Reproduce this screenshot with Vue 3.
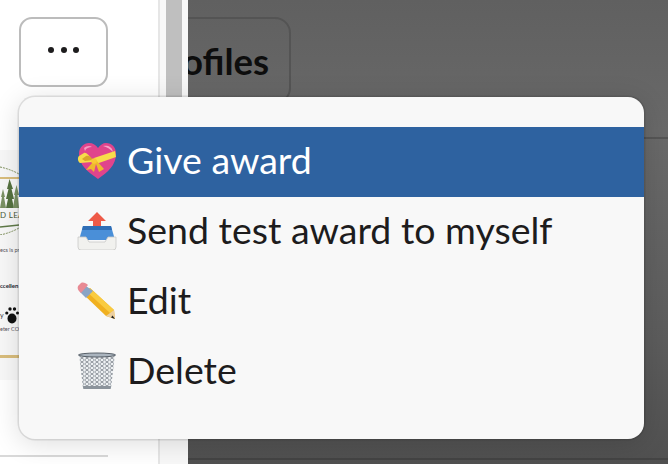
<template>
  <div class="screen">
    <aside class="sidebar">
      <div class="side-panel">
        <button class="more-btn" aria-label="More actions">
          <span class="dot"></span><span class="dot"></span><span class="dot"></span>
        </button>
        <!-- award certificate thumbnail, mostly hidden by the menu -->
        <div class="thumb">
          <svg class="crest" viewBox="0 0 19 70" width="19" height="70">
            <path d="M0 2 Q10 4 19 9" fill="none" stroke="#7d8f5a" stroke-width="1" stroke-dasharray="2 1" />
            <path d="M0 13h19" stroke="#d9bd7c" stroke-width="2" />
            <path d="M9.500 14l3.500 10h-1.500l2.500 10h-2l2 9H6l2-9H6l2.500-10H7z" fill="#55723f" />
            <path d="M3 24l2 8H4l2 11H0l2-11H1zM16.500 20l2.500 10h-1.500l1.500 13h-6l2-13h-1z" fill="#7a9163" />
            <text x="0" y="53" class="crest-text">D LEA</text>
            <path d="M0 62 Q10 61 19 60" fill="none" stroke="#5f7a48" stroke-width="1.500" />
            <path d="M0 70 Q10 68 19 63" fill="none" stroke="#7d8f5a" stroke-width="1" stroke-dasharray="2 1" />
          </svg>
          <div class="thumb-small">ecs is pr</div>
          <div class="thumb-bold">ccellen</div>
          <div class="thumb-paw">
            <span class="paw-text">y</span>
            <svg viewBox="0 0 14 18" width="14" height="18">
              <ellipse cx="7" cy="12.500" rx="4.500" ry="5" fill="#111" />
              <circle cx="1.800" cy="7" r="1.600" fill="#111" />
              <circle cx="5" cy="3" r="1.700" fill="#111" />
              <circle cx="9.500" cy="3" r="1.700" fill="#111" />
              <circle cx="12.500" cy="7" r="1.500" fill="#111" />
            </svg>
          </div>
          <div class="thumb-small last">eter CO</div>
          <div class="gold"></div>
        </div>
        <div class="side-rule"></div>
      </div>
      <div class="gutter"><div class="scroll-thumb"></div></div>
    </aside>

    <main class="main">
      <div class="tab-row">
        <div class="tab">Profiles</div>
      </div>
      <div class="main-rule"></div>
      <div class="main-rule bottom"></div>
    </main>

    <div class="menu">
      <div
        v-for="item in items"
        :key="item.label"
        class="menu-item"
        :class="{ active: item.active }"
      >
        <svg v-if="item.icon === 'heart'" class="emoji" viewBox="0 0 40 38">
          <path d="M21 37C11 30 2 23 2 12 2 5 7 1 12 1c4 0 7 2 9 5 2-3 5-5 8-5 6 0 10 4 10 11 0 11-8 18-18 25z" fill="#e0448c" />
          <path d="M7 6c2-2 6-3 8-1-3 0-6 1-7 4z" fill="#f59cc4" />
          <path d="M26 4c4-1 9 0 10 6-3-3-6-5-10-6z" fill="#f7a3c9" />
          <path d="M17 16l21-7 1 6-20 7z" fill="#f7dc4a" />
          <path d="M15 18C12 13 9 10 7 11l-5 3c-2 2-1 6 1 7l12-1z" fill="#f7dc4a" />
          <path d="M16 18C14 14 11 13 9 14l-4 3 3 2z" fill="#d9a52a" />
          <path d="M16 20l-7 8 5-1 3 3 2-8 3 8 5-3-8-9z" fill="#eeb92e" />
          <circle cx="17" cy="19" r="2.800" fill="#f9c834" />
        </svg>
        <svg v-else-if="item.icon === 'outbox'" class="emoji" viewBox="0 0 40 38">
          <path d="M20 0l9 9h-5v6h-8V9h-5z" fill="#ee5a48" />
          <path d="M6 14h28l4 14H2z" fill="#4a8fd8" />
          <path d="M6 14h28l1 4H5z" fill="#2f6eb6" />
          <path d="M1 25h8l3 5h16l3-5h8v10a3 3 0 0 1-3 3H4a3 3 0 0 1-3-3z" fill="#f1f1ee" stroke="#c9c9c6" stroke-width="0.8" />
        </svg>
        <svg v-else-if="item.icon === 'pencil'" class="emoji" viewBox="0 0 40 38">
          <path d="M13 6l24 22 1 9-9-3L6 12z" fill="#f0b020" />
          <path d="M13 6l24 22-4 3L9 9z" fill="#f9cb40" />
          <path d="M29 34l4-3 4-3 1 9z" fill="#eccf9f" />
          <path d="M35.500 33.500L38 37l-4-1.500z" fill="#222" />
          <path d="M9 4l7 5-7 7-6-6z" fill="#8aa4c4" />
          <path d="M4 1c2-1 5 0 7 2l-7 8C1 9 0 6 1 4z" fill="#e88a94" />
        </svg>
        <svg v-else class="emoji" viewBox="0 0 40 38">
          <defs>
            <pattern id="mesh" width="5" height="4" patternUnits="userSpaceOnUse">
              <path d="M0 2L2.500 0l2.500 2L2.500 4z" fill="none" stroke="#7b838c" stroke-width="0.8" />
            </pattern>
          </defs>
          <path d="M2 3h36l-4 33H6z" fill="#eef1f3" />
          <path d="M2 3h36l-4 33H6z" fill="url(#mesh)" />
          <path d="M6 34h28l-.3 3H6.300z" fill="#8b939b" />
          <ellipse cx="20" cy="3" rx="18.500" ry="2" fill="#aab4be" stroke="#59616a" stroke-width="1" />
        </svg>
        <span class="label">{{ item.label }}</span>
      </div>
    </div>
  </div>
</template>

<script setup>
const items = [
  { label: 'Give award', icon: 'heart', active: true },
  { label: 'Send test award to myself', icon: 'outbox' },
  { label: 'Edit', icon: 'pencil' },
  { label: 'Delete', icon: 'trash' },
]
</script>

<style>
html, body {
  margin: 0;
  overflow: hidden;
}
</style>

<style scoped>
.screen {
  position: relative;
  width: 668px;
  height: 464px;
  display: flex;
  overflow: hidden;
  font-family: Lato, "Liberation Sans", sans-serif;
}

.sidebar {
  width: 188px;
  flex: none;
  display: flex;
  background: #fff;
}

.side-panel {
  width: 160px;
  flex: none;
  box-sizing: border-box;
  border-right: 2px solid #e6e6e6;
  padding-top: 17px;
}

.gutter {
  flex: 1;
  padding: 0 6px;
  background: #f8f8f8;
}

.scroll-thumb {
  height: 420px;
  background: #bfbfbf;
}

.more-btn {
  display: flex;
  align-items: center;
  justify-content: center;
  gap: 6.5px;
  width: 89px;
  height: 70px;
  margin-left: 19px;
  padding: 0 0 4px;
  box-sizing: border-box;
  background: #fff;
  border: 2px solid #bcbcbc;
  border-radius: 13px;
}

.dot {
  width: 6px;
  height: 6px;
  border-radius: 50%;
  background: #1d1c1d;
}

.thumb {
  margin-top: 63px;
  height: 230px;
  padding-top: 15px;
  box-sizing: border-box;
  background: #f8f8f8;
  overflow: hidden;
  display: flex;
  flex-direction: column;
  color: #333;
  white-space: nowrap;
}

.crest {
  display: block;
  flex: none;
}

.crest-text {
  font-size: 8px;
  letter-spacing: 0.3px;
  fill: #4b5a37;
}

.gold {
  height: 3px;
  width: 19px;
  background: #d9bd7c;
  flex: none;
  margin-top: 22px;
}

.thumb-small {
  margin-top: 11px;
  font-size: 5.5px;
  line-height: 8px;
  color: #55505a;
}

.thumb-small.last {
  margin-top: 1px;
}

.thumb-bold {
  margin-top: 28px;
  font-size: 6px;
  line-height: 8px;
  font-weight: 700;
  color: #201c2c;
}

.thumb-paw {
  margin-top: 16px;
  display: flex;
  align-items: center;
  gap: 1px;
}

.paw-text {
  font-size: 7px;
  width: 4px;
}

.side-rule {
  margin-top: 75px;
  width: 108px;
  height: 2px;
  background: #d9d9d9;
}

.main {
  flex: 1;
  background: linear-gradient(#606060, #696969 130px, #5c5c5c 340px, #505050);
  overflow: hidden;
}

.tab-row {
  height: 121px;
  padding-top: 17px;
  box-sizing: border-box;
  margin-left: -60px;
}

.tab {
  display: flex;
  justify-content: flex-end;
  box-sizing: border-box;
  height: 87px;
  width: 163px;
  padding: 22px 20px 0 0;
  border: 2px solid #545454;
  border-radius: 16px;
  font-size: 36.5px;
  line-height: 40px;
  font-weight: 700;
  color: #0d0d0d;
}

.main-rule {
  margin-top: 16px;
  height: 2px;
  background: #555;
}

.main-rule.bottom {
  margin-top: 319px;
  background: #444;
}

.menu {
  position: absolute;
  left: 19px;
  top: 97px;
  width: 625px;
  height: 342px;
  box-sizing: border-box;
  padding-top: 30px;
  background: #f8f8f8;
  border-radius: 16px;
  box-shadow: 0 0 0 1.5px rgba(0, 0, 0, 0.1), 0 4px 28px rgba(0, 0, 0, 0.14);
  color: #1d1c1d;
}

.menu-item {
  display: flex;
  align-items: center;
  height: 70px;
  box-sizing: border-box;
  padding: 0 0 3px 58px;
  font-size: 37.5px;
}

.menu-item.active {
  background: #2e62a0;
  color: #fff;
}

.emoji {
  width: 40px;
  height: 38px;
  flex: none;
}

.label {
  margin: 0 0 2px 10px;
}
</style>
